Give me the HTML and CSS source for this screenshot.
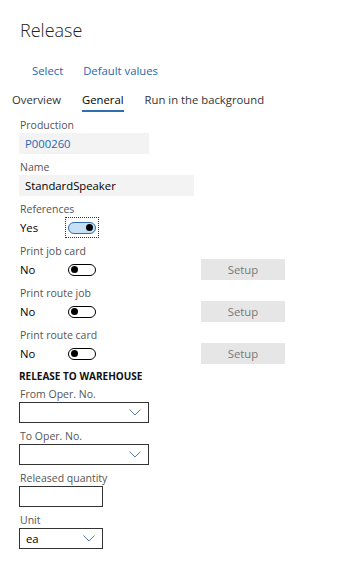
FILE: index.html
```html
<!DOCTYPE html>
<html lang="en">
<head>
    <meta charset="UTF-8">
    <meta name="viewport" content="width=device-width, initial-scale=1.0">
    <title>Release</title>
    <link rel="stylesheet" href="styles.css">
</head>
<body>
    <div class="dialog">
        <h1 class="title">Release</h1>

        <!-- Barra de ações -->
        <div class="actions">
            <a class="action">Select</a>
            <a class="action">Default values</a>
        </div>

        <!-- Abas -->
        <div class="tabs">
            <span class="tab">Overview</span>
            <span class="tab active">General</span>
            <span class="tab">Run in the background</span>
        </div>

        <div class="form">
            <div class="field">
                <label>Production</label>
                <div class="readonly short link">P000260</div>
            </div>
            <div class="field">
                <label>Name</label>
                <div class="readonly long">StandardSpeaker</div>
            </div>

            <div class="field">
                <label>References</label>
                <div class="toggle-row">
                    <span class="toggle-text">Yes</span>
                    <span class="focus-box"><span class="toggle on"><span class="knob"></span></span></span>
                </div>
            </div>
            <div class="field">
                <label>Print job card</label>
                <div class="toggle-row">
                    <span class="toggle-text">No</span>
                    <span class="focus-box plain"><span class="toggle"><span class="knob"></span></span></span>
                    <button class="setup">Setup</button>
                </div>
            </div>
            <div class="field">
                <label>Print route job</label>
                <div class="toggle-row">
                    <span class="toggle-text">No</span>
                    <span class="focus-box plain"><span class="toggle"><span class="knob"></span></span></span>
                    <button class="setup">Setup</button>
                </div>
            </div>
            <div class="field">
                <label>Print route card</label>
                <div class="toggle-row">
                    <span class="toggle-text">No</span>
                    <span class="focus-box plain"><span class="toggle"><span class="knob"></span></span></span>
                    <button class="setup">Setup</button>
                </div>
            </div>

            <h2 class="group">RELEASE TO WAREHOUSE</h2>

            <div class="field">
                <label>From Oper. No.</label>
                <div class="box short">
                    <span class="value"></span>
                    <svg class="chevron" width="12" height="7" viewBox="0 0 12 7"><polyline points="0.5,0.5 6,6 11.5,0.5" fill="none" stroke="#5b7fae" stroke-width="1"/></svg>
                </div>
            </div>
            <div class="field">
                <label>To Oper. No.</label>
                <div class="box short">
                    <span class="value"></span>
                    <svg class="chevron" width="12" height="7" viewBox="0 0 12 7"><polyline points="0.5,0.5 6,6 11.5,0.5" fill="none" stroke="#5b7fae" stroke-width="1"/></svg>
                </div>
            </div>
            <div class="field">
                <label>Released quantity</label>
                <div class="box tiny"></div>
            </div>
            <div class="field">
                <label>Unit</label>
                <div class="box tiny">
                    <span class="value">ea</span>
                    <svg class="chevron" width="12" height="7" viewBox="0 0 12 7"><polyline points="0.5,0.5 6,6 11.5,0.5" fill="none" stroke="#5b7fae" stroke-width="1"/></svg>
                </div>
            </div>
        </div>
    </div>
</body>
</html>
```

FILE: styles.css
```css
body {
    margin: 0;
    padding: 0;
    background-color: #fff;
    color: #000;
    font-family: 'Open Sans', 'Noto Sans', sans-serif;
    font-size: 11.3px;
}
.dialog {
    width: 351px;
}
.title {
    margin: 0;
    padding: 16px 0 0 20px;
    font-size: 18px;
    font-weight: 300;
    line-height: 28px;
    color: #222;
}
.actions {
    display: flex;
    gap: 20px;
    padding: 18px 0 0 32px;
    height: 18px;
}
.action {
    color: #1f68b3;
    font-size: 11.3px;
    line-height: 18px;
}
.tabs {
    display: flex;
    gap: 21px;
    padding: 12px 0 0 12px;
}
.tab {
    font-size: 11.3px;
    line-height: 16px;
    color: #333;
    padding-bottom: 2px;
    border-bottom: 2px solid transparent;
}
.tab.active {
    color: #000;
    border-bottom-color: #2f6faf;
}
.form {
    padding: 6px 0 0 19px;
}
.field {
    margin-bottom: 6px;
}
label {
    display: block;
    font-size: 10.5px;
    line-height: 15px;
    color: #555;
    padding-left: 1px;
}
.readonly {
    height: 21px;
    line-height: 21px;
    background-color: #f3f3f3;
    padding-left: 6px;
    font-size: 11.3px;
    box-sizing: border-box;
}
.readonly.short {
    width: 130px;
}
.readonly.long {
    width: 175px;
}
.link {
    color: #1f68b3;
}
.toggle-row {
    display: flex;
    align-items: center;
    height: 21px;
}
.toggle-text {
    width: 45px;
    padding-left: 1px;
    font-size: 11.3px;
}
.focus-box {
    display: flex;
    align-items: center;
    justify-content: center;
    width: 32px;
    height: 19px;
    border: 1px dotted #333;
}
.focus-box.plain {
    border-color: transparent;
}
.toggle {
    display: flex;
    align-items: center;
    width: 28px;
    height: 12px;
    box-sizing: border-box;
    border: 1px solid #000;
    border-radius: 7px;
    padding: 0 2px;
    background-color: #fff;
}
.toggle.on {
    justify-content: flex-end;
    background-color: #c7e0f4;
    border-color: #2f6faf;
}
.knob {
    width: 7px;
    height: 7px;
    border-radius: 50%;
    background-color: #000;
}
.setup {
    margin-left: 102px;
    width: 84px;
    height: 21px;
    border: none;
    background-color: #e6e6e6;
    color: #777;
    font-family: inherit;
    font-size: 11.3px;
    padding: 0;
}
.group {
    margin: -1px 0 4px;
    font-size: 10px;
    font-weight: 700;
    line-height: 14px;
    color: #111;
}
.box {
    display: flex;
    align-items: center;
    justify-content: space-between;
    height: 21px;
    box-sizing: border-box;
    border: 1px solid #333;
    padding: 0 7px 0 6px;
}
.box.short {
    width: 130px;
}
.box.tiny {
    width: 84px;
}
.value {
    font-size: 11.3px;
}
```
